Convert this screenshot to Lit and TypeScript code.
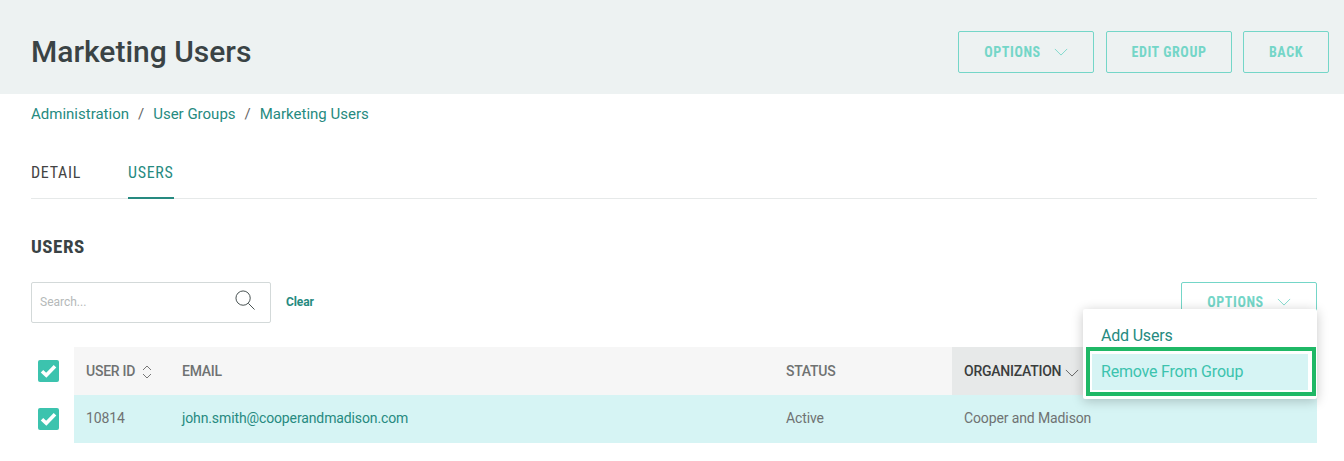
import { LitElement, html, css } from 'lit';
import { customElement } from 'lit/decorators.js';

const chevron = html`<svg class="chev" width="14" height="8" viewBox="0 0 16 9"><path d="M1 1l7 7 7-7" fill="none" stroke="currentColor" stroke-width="1"/></svg>`;

const check = html`<span class="check"><svg width="17" height="14" viewBox="0 0 17 14"><path d="M2 7.2l4.3 4 8.7-9" fill="none" stroke="#fff" stroke-width="3.6"/></svg></span>`;

@customElement('app-root')
export class AppRoot extends LitElement {
  static styles = css`
    :host {
      display: block;
      height: 461px;
      overflow: hidden;
      background: #fff;
      font-family: Roboto, "Liberation Sans", sans-serif;
      color: #333;
    }

    .top {
      height: 94px;
      background: #edf2f2;
      display: flex;
      align-items: center;
      padding: 0 15px 0 31px;
      box-sizing: border-box;
    }
    h1 {
      margin: 8px 0 0;
      flex: 1;
      font-size: 30px;
      font-weight: 500;
      color: #3a4345;
    }
    .actions {
      display: flex;
      gap: 12px;
      margin-top: 10px;
    }

    .btn {
      height: 42px;
      box-sizing: border-box;
      border: 1px solid #74d6c8;
      border-radius: 2px;
      display: flex;
      align-items: center;
      justify-content: center;
      gap: 13px;
      font-size: 14px;
      font-weight: 700;
      font-stretch: 75%;
      letter-spacing: 0.6px;
      color: #74d6c8;
    }
    .w136 { width: 136px; }
    .w126 { width: 126px; margin-right: -1px; }
    .w86 { width: 86px; }
    .tools .btn { padding-bottom: 2px; }

    main {
      padding: 0 27px 0 31px;
    }
    .crumbs {
      height: 40px;
      display: flex;
      align-items: center;
      gap: 9px;
      font-size: 15px;
      color: #268a80;
    }
    .crumbs i {
      font-style: normal;
      color: #666;
    }

    .tabs {
      margin-top: 16px;
      height: 48px;
      display: flex;
      gap: 47px;
      border-bottom: 1px solid #e6e9e9;
      font-size: 16px;
      font-stretch: 75%;
    }
    .tab {
      display: flex;
      align-items: center;
      height: 49px;
      box-sizing: border-box;
      border-bottom: 2px solid transparent;
      padding-bottom: 2px;
      color: #444;
      letter-spacing: 0.7px;
    }
    .tab.on {
      color: #268a80;
      border-bottom-color: #268a80;
    }

    h2 {
      margin: 37px 0 0;
      font-size: 19px;
      line-height: 22px;
      font-weight: 700;
      font-stretch: 75%;
      color: #3a4345;
      letter-spacing: 0.5px;
    }

    .tools {
      margin-top: 24px;
      display: flex;
      align-items: flex-start;
      gap: 15px;
      position: relative;
    }
    .search {
      width: 240px;
      height: 41px;
      box-sizing: border-box;
      border: 1px solid #d3d9d9;
      border-radius: 2px;
      display: flex;
      align-items: center;
      justify-content: space-between;
      padding: 0 15px 2px 8px;
      font-size: 12px;
      color: #b5b9b9;
    }
    .search svg { margin-bottom: 4px; }
    .clear {
      flex: 1;
      line-height: 41px;
      font-size: 12px;
      font-weight: 700;
      letter-spacing: -0.1px;
      color: #268a80;
    }

    table {
      margin-top: 23px;
      border-collapse: collapse;
      table-layout: fixed;
      width: 1286px;
      font-size: 14px;
    }
    th, td {
      height: 48px;
      padding: 0 12px;
      text-align: left;
      box-sizing: border-box;
      color: #6f7272;
      font-weight: 400;
      letter-spacing: -0.12px;
    }
    th {
      background: #f6f6f6;
      font-weight: 500;
      letter-spacing: -0.25px;
    }
    td {
      background: #d6f4f4;
      padding-bottom: 2px;
    }
    th.box, td.box {
      background: #fff;
      padding: 0 0 0 7px;
    }
    th.sorted {
      background: #e7e9e9;
      color: #3a3d3d;
    }
    th .chev {
      color: #555;
      margin-left: 1px;
      vertical-align: -1px;
    }
    td.mail { color: #268a80; }
    .sort { margin-left: 7px; vertical-align: -3px; }

    .check {
      width: 21px;
      height: 22px;
      border-radius: 2px;
      background: #3cc3ae;
      display: flex;
      align-items: center;
      justify-content: center;
    }

    .menu {
      position: absolute;
      right: 0;
      top: 27px;
      width: 234px;
      height: 90px;
      box-sizing: border-box;
      background: #fff;
      border-radius: 2px;
      box-shadow: 0 2px 12px rgba(0, 0, 0, 0.22);
      padding-top: 15px;
      font-size: 16px;
      letter-spacing: -0.2px;
    }
    .item {
      height: 23px;
      line-height: 23px;
      padding-left: 18px;
      color: #268a80;
    }
    .hl {
      margin: 0 1px 0 3px;
      height: 49px;
      box-sizing: border-box;
      border: 4px solid #1fb866;
      padding: 3px 4px 2px 2px;
    }
    .hl div {
      height: 100%;
      background: #d6f4f4;
      color: #3cc3ae;
      line-height: 35px;
      padding-left: 9px;
    }
  `;

  render() {
    return html`
      <div class="top">
        <h1>Marketing Users</h1>
        <div class="actions">
          <div class="btn w136">OPTIONS ${chevron}</div>
          <div class="btn w126">EDIT GROUP</div>
          <div class="btn w86">BACK</div>
        </div>
      </div>
      <main>
        <div class="crumbs">
          <span>Administration</span><i>/</i><span>User Groups</span><i>/</i><span>Marketing Users</span>
        </div>
        <div class="tabs">
          <div class="tab">DETAIL</div>
          <div class="tab on">USERS</div>
        </div>
        <h2>USERS</h2>
        <div class="tools">
          <div class="search">
            <span>Search...</span>
            <svg width="20" height="20" viewBox="0 0 21 21"><circle cx="8.5" cy="8.5" r="7.5" fill="none" stroke="#3f4a4a" stroke-width="1"/><path d="M14 14l6.5 6.5" stroke="#3f4a4a" stroke-width="1"/></svg>
          </div>
          <div class="clear">Clear</div>
          <div class="btn w136">OPTIONS ${chevron}</div>
          <div class="menu">
            <div class="item">Add Users</div>
            <div class="hl"><div>Remove From Group</div></div>
          </div>
        </div>
        <table>
          <colgroup>
            <col style="width:43px" /><col style="width:96px" /><col style="width:604px" /><col style="width:178px" /><col />
          </colgroup>
          <tr>
            <th class="box">${check}</th>
            <th>USER ID<svg class="sort" width="10" height="14" viewBox="0 0 10 14"><path d="M1 5l4-4 4 4M1 9l4 4 4-4" fill="none" stroke="#777" stroke-width="1"/></svg></th>
            <th>EMAIL</th>
            <th>STATUS</th>
            <th class="sorted">ORGANIZATION ${chevron}</th>
          </tr>
          <tr>
            <td class="box">${check}</td>
            <td>10814</td>
            <td class="mail">john.smith@cooperandmadison.com</td>
            <td>Active</td>
            <td>Cooper and Madison</td>
          </tr>
        </table>
      </main>
    `;
  }
}
